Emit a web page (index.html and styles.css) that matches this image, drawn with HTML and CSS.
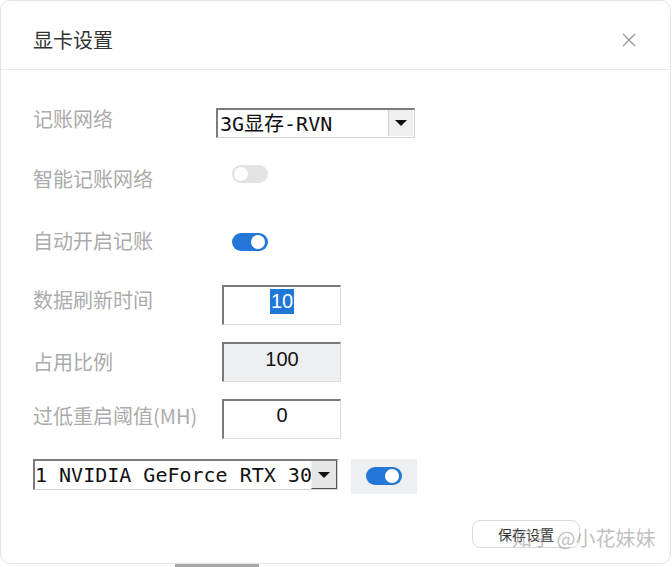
FILE: index.html
```html
<!DOCTYPE html>
<html lang="zh">
<head>
<meta charset="utf-8">
<title>显卡设置</title>
<link rel="stylesheet" href="styles.css">
</head>
<body>
<div class="dialog">
  <div class="header">
    <div class="title">显卡设置</div>
    <svg class="close" width="14" height="14" viewBox="0 0 14 14"><path d="M1 1 L13 13 M13 1 L1 13" stroke="#9a9a9a" stroke-width="1.4" fill="none"/></svg>
  </div>
  <div class="body">
    <div class="row r1">
      <div class="label w-sel">记账网络</div>
      <div class="select sel-net">
        <span class="sel-text">3G显存-RVN</span>
        <span class="sel-btn flat"><i class="tri"></i></span>
      </div>
    </div>
    <div class="row r2">
      <div class="label w-tog lb2">智能记账网络</div>
      <div class="toggle off"><span class="knob"></span></div>
    </div>
    <div class="row r3">
      <div class="label w-tog">自动开启记账</div>
      <div class="toggle on tg3"><span class="knob"></span></div>
    </div>
    <div class="row r4">
      <div class="label w-inp lb4">数据刷新时间</div>
      <div class="input"><span class="sel-hl">10</span></div>
    </div>
    <div class="row r5">
      <div class="label w-inp lb5">占用比例</div>
      <div class="input disabled">100</div>
    </div>
    <div class="row r6">
      <div class="label w-inp lb6">过低重启阈值(MH)</div>
      <div class="input">0</div>
    </div>
    <div class="row r7">
      <div class="select sel-gpu">
        <span class="sel-text gpu-text">1 NVIDIA GeForce RTX 3060</span>
        <span class="sel-btn raised"><i class="tri"></i></span>
      </div>
      <div class="tog-box"><div class="toggle on"><span class="knob"></span></div></div>
    </div>
    <div class="footer">
      <button class="save">保存设置</button>
    </div>
  </div>
  <div class="watermark">知乎 @小花妹妹</div>
</div>
<div class="under"></div>
</body>
</html>
```
FILE: styles.css
```css
* { box-sizing: border-box; }
html, body { margin: 0; padding: 0; background: #fff; }
body {
  width: 672px;
  height: 567px;
  overflow: hidden;
  font-family: "Noto Sans CJK SC", "Noto Sans", sans-serif;
}
.dialog {
  position: relative;
  width: 671px;
  height: 564px;
  border: 1px solid #e4e4e4;
  border-radius: 10px;
  background: #fff;
}
.header {
  height: 69px;
  border-bottom: 1px solid #e8e8e8;
  display: flex;
  align-items: flex-start;
  justify-content: space-between;
  padding: 0 34px 0 32px;
}
.title {
  margin-top: 25px;
  font-size: 20px;
  line-height: 28px;
  color: #333;
}
.close { margin-top: 32px; }
.body {
  padding-left: 32px;
}
.row {
  display: flex;
  align-items: flex-start;
}
.label {
  font-size: 20px;
  line-height: 24px;
  color: #ababab;
  white-space: nowrap;
}
.w-sel { width: 183px; }
.w-tog { width: 199px; }
.w-inp { width: 189px; }
.r1 { margin-top: 37px; }
.r1 .select { margin-top: 1px; }
.r2 { margin-top: 27px; }
.lb2 { margin-top: 2px; }
.r3 { margin-top: 38px; }
.tg3 { margin-top: 4px; }
.r4 { margin-top: 32px; }
.lb4 { margin-top: 3px; }
.r5 { margin-top: 17px; }
.lb5 { margin-top: 8px; }
.r6 { margin-top: 17px; }
.lb6 { margin-top: 5px; }
.r7 { margin-top: 20px; }

.select {
  display: flex;
  align-items: stretch;
  background: #fff;
  border-top: 2px solid #7c7c7c;
  border-left: 2px solid #7c7c7c;
  border-right: 1px solid #d4d4d4;
  border-bottom: 1px solid #d4d4d4;
  font-family: "DejaVu Sans Mono", "Noto Sans CJK SC", monospace;
  font-size: 20px;
  color: #111;
}
.sel-net { width: 199px; height: 30px; }
.sel-gpu { width: 305px; height: 31px; }
.sel-text {
  flex: 1;
  padding-left: 2px;
  line-height: 28px;
  white-space: nowrap;
  overflow: hidden;
}
.gpu-text { padding-left: 0; }
.sel-btn {
  width: 25px;
  display: flex;
  align-items: center;
  justify-content: center;
  background: #efefef;
}
.sel-btn.flat {
  border-left: 1px solid #cfcfcf;
  margin: 0 1px 1px 0;
}
.sel-btn.raised {
  width: 26px;
  background: #e6e6e6;
  border-right: 1px solid #555;
  border-bottom: 1px solid #555;
  border-left: 1px solid #f5f5f5;
}
.tri {
  width: 0; height: 0;
  border-left: 6px solid transparent;
  border-right: 6px solid transparent;
  border-top: 6px solid #111;
}

.toggle {
  position: relative;
  width: 36px;
  height: 18px;
  border-radius: 9px;
}
.toggle .knob {
  position: absolute;
  top: 2px;
  width: 14px;
  height: 14px;
  border-radius: 50%;
  background: #fff;
}
.toggle.off { background: #e3e3e3; }
.toggle.off .knob { left: 1px; top: 1px; width: 16px; height: 16px; border: 1px solid #e0e0e0; }
.toggle.on { background: #2277d8; }
.toggle.on .knob { right: 3px; }

.input {
  width: 119px;
  height: 40px;
  border-top: 2px solid #7a7a7a;
  border-left: 2px solid #7a7a7a;
  border-right: 1px solid #dcdcdc;
  border-bottom: 1px solid #dcdcdc;
  background: #fff;
  font-family: "Liberation Sans", Arial, sans-serif;
  font-size: 20px;
  line-height: 24px;
  color: #111;
  text-align: center;
  padding-top: 2px;
}
.input.disabled { background: #eeeff1; padding-top: 3px; }
.sel-hl {
  display: inline-block;
  background: #1e78d7;
  color: #fff;
  padding: 0 1px;
  line-height: 25px;
  margin-top: -1px;
}

.tog-box {
  margin-left: 13px;
  width: 66px;
  height: 35px;
  background: #eeeff1;
  padding: 8px 0 0 15px;
}

.footer {
  display: flex;
  justify-content: flex-end;
  margin-top: 26px;
  padding-right: 90px;
}
.save {
  width: 108px;
  height: 28px;
  border: 1px solid #dadada;
  border-radius: 8px;
  background: #fff;
  font-family: "Noto Sans CJK SC", sans-serif;
  font-size: 14px;
  color: #333;
  padding: 0;
}
.watermark {
  position: absolute;
  left: 511px;
  top: 524px;
  font-size: 20px;
  line-height: 26px;
  color: rgba(140, 140, 140, 0.55);
  white-space: nowrap;
}
.under {
  margin-left: 175px;
  width: 84px;
  height: 3px;
  background: #a8a8a8;
}
```
